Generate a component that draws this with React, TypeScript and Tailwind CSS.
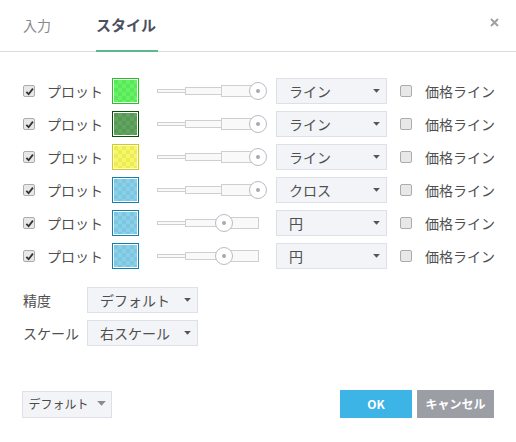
import React from "react";

type Row = {
  color: string;
  border: string;
  handle: number; // px from left of track
  style: string;
};

const ROWS: Row[] = [
  { color: "#3ff03f", border: "#1ec81e", handle: 101, style: "ライン" },
  { color: "#3a8f3a", border: "#0b4f0b", handle: 101, style: "ライン" },
  { color: "#f5f53f", border: "#d6cf00", handle: 101, style: "ライン" },
  { color: "#6cc6e6", border: "#137fb1", handle: 101, style: "クロス" },
  { color: "#6cc6e6", border: "#137fb1", handle: 67, style: "円" },
  { color: "#6cc6e6", border: "#137fb1", handle: 67, style: "円" },
];

const font = "font-['Noto_Sans_CJK_JP','Liberation_Sans',sans-serif]";

function Check({ checked }: { checked?: boolean }) {
  return (
    <span className="flex h-[12px] w-[12px] items-center justify-center rounded-[2px] border border-[#acacac] bg-[#e8e8e8]">
      {checked && (
        <svg width="9" height="9" viewBox="0 0 10 10">
          <path d="M1.5 5.5 L4 8 L8.8 1.8" fill="none" stroke="#333" strokeWidth="2" />
        </svg>
      )}
    </span>
  );
}

function Caret({ color = "#555", w = 8 }: { color?: string; w?: number }) {
  return (
    <svg width={w} height={w * 0.6} viewBox="0 0 8 5">
      <path d="M0 0 H8 L4 4.5 Z" fill={color} />
    </svg>
  );
}

function Select({ label, w }: { label: string; w: string }) {
  return (
    <div
      className={`flex h-[26px] ${w} items-center justify-between border border-[#dde0e6] bg-[#f3f4f7] pl-[12px] pr-[6px] text-[14px] text-[#4f4f4f]`}
    >
      <span>{label}</span>
      <Caret w={7} />
    </div>
  );
}

function Swatch({ color, border }: { color: string; border: string }) {
  return (
    <div className="h-[26px] w-[27px] border p-px bg-white" style={{ borderColor: border }}>
      <div className="relative h-full w-full bg-[repeating-conic-gradient(#ffffff_0_25%,#c8c8c8_0_50%)] bg-[length:8px_8px]">
        <div className="absolute inset-0 opacity-80" style={{ backgroundColor: color }} />
      </div>
    </div>
  );
}

function WidthSlider({ handle }: { handle: number }) {
  return (
    <div className="relative flex h-[20px] w-[112px] items-center">
      <div className="h-[4px] w-[28px] border border-r-0 border-[#cfcfcf] bg-[#f9f9f9]" />
      <div className="h-[8px] w-[36px] border border-r-0 border-[#cfcfcf] bg-[#f9f9f9]" />
      <div className="h-[12px] w-[38px] border border-[#cfcfcf] bg-[#f9f9f9]" />
      <div
        className="absolute top-[1px] flex h-[18px] w-[18px] -translate-x-1/2 items-center justify-center rounded-full border border-[#b9bcc6] bg-white"
        style={{ left: handle }}
      >
        <div className="h-[4px] w-[4px] rounded-full bg-[#a6a9b2]" />
      </div>
    </div>
  );
}

export default function App() {
  return (
    <div className={`h-[442px] w-[516px] bg-white ${font} text-[#4f4f4f]`}>
      <div className="flex h-[52px] items-end border-b border-[#dcdcdc] pl-[23px] pr-[17px]">
        <div className="pb-[15px] text-[14px] text-[#8a8a8a]">入力</div>
        <div className="relative ml-[45px] pb-[15px] text-[15px] font-bold text-[#4b5060]">
          スタイル
          <div className="absolute bottom-[-1px] left-0 right-[-2px] h-[2px] bg-[#5bb98b]" />
        </div>
        <div className="ml-auto mb-[24px]">
          <svg width="9" height="9" viewBox="0 0 9 9">
            <path d="M1 1 L8 8 M8 1 L1 8" stroke="#a0a0a0" strokeWidth="2" />
          </svg>
        </div>
      </div>

      <div className="flex flex-col gap-[7px] pt-[26px]">
        {ROWS.map((r, i) => (
          <div key={i} className="flex h-[26px] items-center">
            <div className="ml-[23px]">
              <Check checked />
            </div>
            <span className="ml-[12px] w-[65px] text-[14px]">プロット</span>
            <Swatch color={r.color} border={r.border} />
            <div className="ml-[18px]">
              <WidthSlider handle={r.handle} />
            </div>
            <div className="ml-[7px]">
              <Select label={r.style} w="w-[111px]" />
            </div>
            <div className="ml-[13px]">
              <Check />
            </div>
            <span className="ml-[13px] text-[14px]">価格ライン</span>
          </div>
        ))}
      </div>

      <div className="mt-[18px] flex flex-col gap-[7px] pl-[23px]">
        <div className="flex h-[26px] items-center">
          <span className="w-[64px] text-[14px]">精度</span>
          <Select label="デフォルト" w="w-[111px]" />
        </div>
        <div className="flex h-[26px] items-center">
          <span className="w-[64px] text-[14px]">スケール</span>
          <Select label="右スケール" w="w-[111px]" />
        </div>
      </div>

      <div className="mt-[44px] flex items-center px-[22px]">
        <div className="flex h-[27px] w-[90px] items-center justify-center gap-[8px] border border-[#dde0e6] bg-[#f3f4f7] text-[12px] text-[#4a4a4a]">
          <span>デフォルト</span>
          <Caret color="#8a8a8a" w={9} />
        </div>
        <div className="ml-auto flex h-[28px] w-[72px] items-center justify-center bg-[#3cb4e5] text-[12px] font-bold text-white">
          OK
        </div>
        <div className="ml-[5px] flex h-[28px] w-[77px] items-center justify-center bg-[#9b9ea5] text-[12px] font-bold text-white">
          キャンセル
        </div>
      </div>
    </div>
  );
}
